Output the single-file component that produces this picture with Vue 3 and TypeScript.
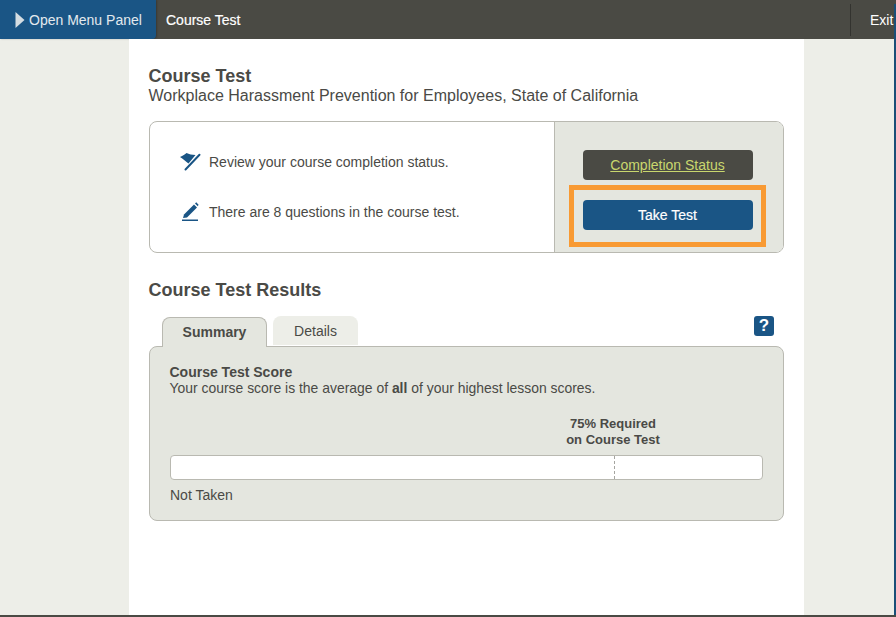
<script setup lang="ts">
const title: string = 'Course Test'
</script>

<template>
  <div class="page">
    <header class="topbar">
      <button class="menu-btn">
        <svg class="menu-arrow" width="10" height="16" viewBox="0 0 10 16"><path d="M0.5 0 L9.5 8 L0.5 16 Z" fill="#d5dde2" /></svg>
        <span>Open Menu Panel</span>
      </button>
      <div class="top-title">{{ title }}</div>
      <div class="exit">Exit</div>
    </header>
    <main class="column">
      <h1 class="h1">{{ title }}</h1>
      <p class="sub">Workplace Harassment Prevention for Employees, State of California</p>

      <section class="card">
        <div class="card-left">
          <div class="row">
            <svg class="ico" width="22" height="20" viewBox="0 0 22 20">
              <path d="M0 5 C3 4 5 2 6.5 1 C9 2 12 3 15.5 3 L8.5 11.5 C6 9.5 3 7 0 5 Z" fill="#1a5585" />
              <path d="M19.5 2.8 L5.5 17.5" stroke="#1a5585" stroke-width="2" stroke-linecap="round" fill="none" />
            </svg>
            <span>Review your course completion status.</span>
          </div>
          <div class="row">
            <svg class="ico" width="22" height="22" viewBox="0 0 22 22">
              <path d="M3 17 L4 13.5 L14 3.5 L17 6.5 L7 16.5 Z" fill="#1a5585" />
              <path d="M15 2.5 L16.2 1.3 L18.6 3.7 L17.8 5.2 Z" fill="#1a5585" />
              <path d="M2 19.3 H18" stroke="#1a5585" stroke-width="1.4" fill="none" />
            </svg>
            <span>There are 8 questions in the course test.</span>
          </div>
        </div>
        <div class="card-right">
          <a class="btn btn-dark">Completion Status</a>
          <a class="btn btn-blue">Take Test</a>
          <div class="highlight"></div>
        </div>
      </section>

      <h2 class="h2">Course Test Results</h2>

      <div class="tabs">
        <div class="tab tab-active">Summary</div>
        <div class="tab">Details</div>
        <div class="help">?</div>
      </div>
      <section class="panel">
        <div class="score-title">Course Test Score</div>
        <div class="score-text">Your course score is the average of <b>all</b> of your highest lesson scores.</div>
        <div class="req-wrap">
          <div class="req">75% Required<br />on Course Test</div>
        </div>
        <div class="bar"><div class="mark"></div></div>
        <div class="status">Not Taken</div>
      </section>
    </main>
    <div class="edge"></div>
  </div>
</template>

<style>
html, body { margin: 0; padding: 0; background: #edeee8; }
</style>

<style scoped>
.page {
  width: 896px;
  height: 617px;
  overflow: hidden;
  box-sizing: border-box;
  background: #edeee8;
  border-bottom: 2px solid #4a4a44;
  font-family: "Liberation Sans", Arial, sans-serif;
  color: #4a4a46;
  display: flex;
  flex-direction: column;
  position: relative;
}
.topbar {
  height: 39px;
  flex: none;
  background: #4a4a44;
  display: flex;
  align-items: center;
  color: #fff;
  font-size: 14px;
}
.menu-btn {
  width: 156px;
  height: 39px;
  border: 0;
  padding: 0 0 0 15px;
  margin: 0;
  background: #1a5585;
  border-bottom-right-radius: 4px;
  color: #e3e9ee;
  font: inherit;
  display: flex;
  align-items: center;
  gap: 4px;
  box-shadow: 1px 0 2px rgba(0, 0, 0, 0.25);
}
.top-title {
  margin-left: 10px;
  color: #fff;
  -webkit-text-stroke: 0.2px #fff;
}
.exit {
  margin-left: auto;
  width: 46px;
  box-sizing: border-box;
  height: 32px;
  line-height: 32px;
  padding-left: 19px;
  border-left: 1px solid #33332f;
  white-space: nowrap;
}
.edge {
  position: absolute;
  top: 4px;
  right: 0;
  bottom: -2px;
  width: 2px;
  background: #1a4f78;
}
.column {
  width: 675px;
  margin-left: 129px;
  flex: 1;
  box-sizing: border-box;
  background: #fff;
  padding: 27px 20px 0;
}
.h1 {
  margin: 0 0 0 -0.5px;
  font-size: 18px;
  line-height: 20px;
  font-weight: 700;
}
.sub {
  margin: 0 0 0 -0.5px;
  font-size: 16px;
  line-height: 20px;
}
.card {
  margin-top: 15px;
  height: 132px;
  box-sizing: border-box;
  border: 1px solid #b9b9b1;
  border-radius: 8px;
  display: flex;
  overflow: hidden;
}
.card-left {
  flex: 1;
  padding: 29px 0 0 30px;
  display: flex;
  flex-direction: column;
  gap: 28px;
  font-size: 14px;
}
.row {
  display: flex;
  align-items: center;
  height: 22px;
  gap: 7px;
}
.ico { flex: none; }
.card-right {
  width: 229px;
  flex: none;
  box-sizing: border-box;
  background: #e4e6df;
  border-left: 1px solid #b9b9b1;
  padding: 28px 0 0 28px;
  position: relative;
  display: flex;
  flex-direction: column;
  gap: 20px;
}
.btn {
  width: 170px;
  height: 30px;
  line-height: 30px;
  text-align: center;
  text-indent: -1px;
  border-radius: 4px;
  font-size: 14px;
}
.btn-dark {
  background: #4a4a44;
  color: #c9d76e;
  text-decoration: underline;
}
.btn-blue {
  background: #1a5585;
  color: #fff;
  -webkit-text-stroke: 0.2px #fff;
}
.highlight {
  position: absolute;
  left: 14px;
  top: 63px;
  width: 197px;
  height: 62px;
  box-sizing: border-box;
  border: 5px solid #f89a33;
}
.h2 {
  margin: 27px 0 0 -0.5px;
  font-size: 18px;
  line-height: 20px;
  font-weight: 700;
}
.tabs {
  margin-top: 16px;
  height: 30px;
  display: flex;
  align-items: flex-end;
  padding-left: 13px;
  gap: 6px;
  position: relative;
  z-index: 1;
}
.tab {
  width: 85px;
  height: 29px;
  box-sizing: border-box;
  background: #edeee8;
  border-radius: 8px 8px 0 0;
  text-align: center;
  line-height: 30px;
  font-size: 14px;
  margin-bottom: 1px;
}
.tab-active {
  width: 105px;
  height: 30px;
  background: #e4e6df;
  border: 1px solid #b9b9b1;
  border-bottom: 0;
  font-weight: 700;
  line-height: 28px;
  margin-bottom: -1px;
}
.help {
  position: absolute;
  right: 10px;
  top: 0;
  width: 20px;
  height: 20px;
  border-radius: 3px;
  background: #1a5585;
  color: #fff;
  font-weight: 700;
  font-size: 17px;
  line-height: 20px;
  text-align: center;
}
.panel {
  height: 175px;
  box-sizing: border-box;
  background: #e4e6df;
  border: 1px solid #b9b9b1;
  border-radius: 8px;
  padding: 17px 20px 0;
  font-size: 14px;
}
.score-title {
  font-weight: 700;
  line-height: 16px;
  margin-left: -0.5px;
}
.score-text {
  line-height: 16px;
  font-size: 13.93px;
  margin-left: -0.5px;
}
.req-wrap {
  margin-top: 20px;
  padding-left: 393px;
  height: 39px;
}
.req {
  width: 100px;
  text-align: center;
  font-weight: 700;
  font-size: 13px;
  line-height: 16px;
  white-space: nowrap;
}
.bar {
  width: 593px;
  height: 25px;
  box-sizing: border-box;
  background: #fff;
  border: 1px solid #b9b9b1;
  border-radius: 4px;
  position: relative;
}
.mark {
  position: absolute;
  left: 443px;
  top: 0;
  bottom: 0;
  border-left: 1px dashed #a5a5a0;
}
.status {
  margin-top: 7px;
  line-height: 16px;
}
</style>
